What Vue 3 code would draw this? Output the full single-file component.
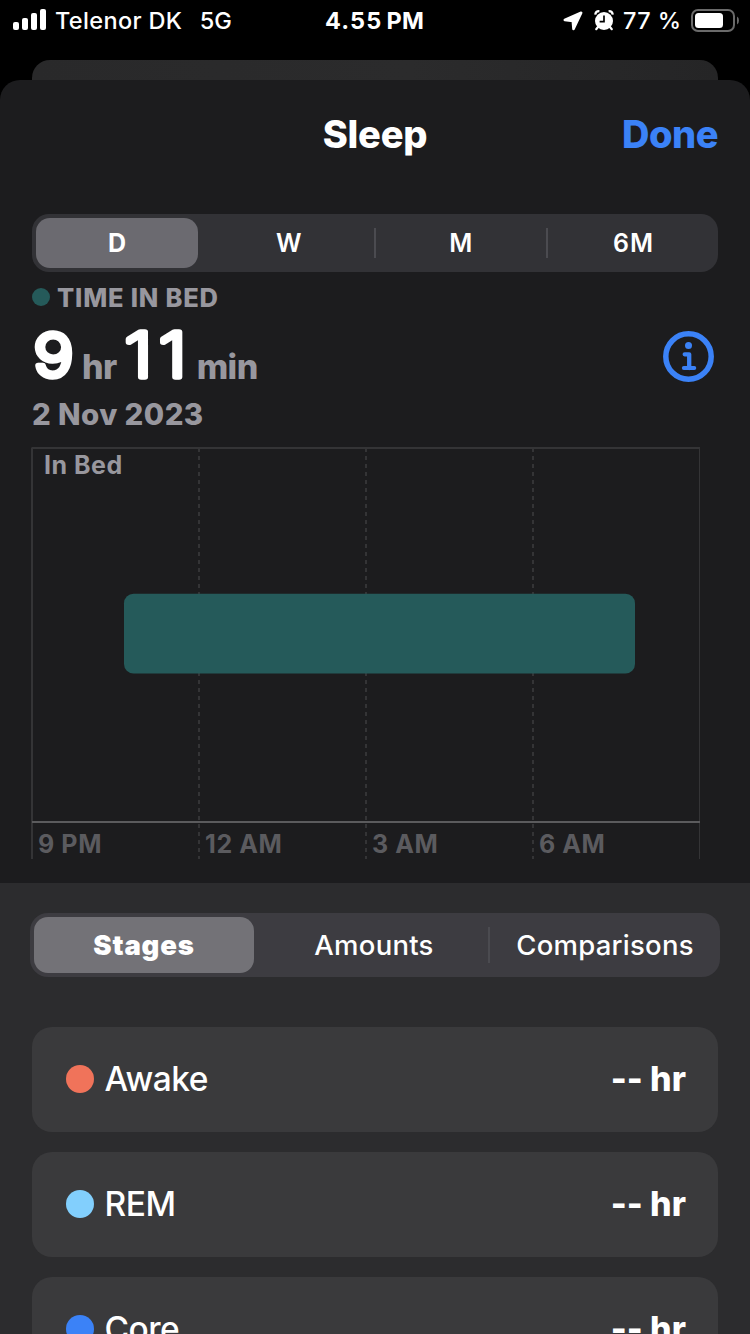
<script setup>
const ranges = ['D', 'W', 'M', '6M']
const tabs = ['Stages', 'Amounts', 'Comparisons']
const ticks = ['9 PM', '12 AM', '3 AM', '6 AM']
const stages = [
  { name: 'Awake', key: 'awake' },
  { name: 'REM', key: 'rem' },
  { name: 'Core', key: 'core' },
]
</script>

<template>
  <div class="phone">
    <div class="status">
      <div class="side left">
        <svg class="signal" width="34" height="22" viewBox="0 0 34 22" fill="#fff">
          <rect x="0" y="13" width="6" height="8" rx="2" />
          <rect x="9" y="9" width="6" height="12" rx="2" />
          <rect x="18" y="4" width="6" height="17" rx="2" />
          <rect x="27" y="0" width="6" height="21" rx="2" />
        </svg>
        <span class="carrier">Telenor DK</span>
        <span class="network">5G</span>
      </div>
      <div class="clock">4.55<span class="pm">PM</span></div>
      <div class="side right">
        <svg class="arrow" width="20" height="20" viewBox="0 0 20 20">
          <path d="M18.200 1.800 L1.800 9 L9.800 10 L10.500 18 Z" fill="#fff" stroke="#fff" stroke-width="2.600" stroke-linejoin="round" />
        </svg>
        <svg class="alarm" width="20" height="21" viewBox="0 0 20 21">
          <path d="M1.200 4.600 A4 4 0 0 1 5.400 1.200 M18.800 4.600 A4 4 0 0 0 14.600 1.200" fill="none" stroke="#fff" stroke-width="2.200" />
          <path d="M4 17 L2.200 19.200 M16 17 L17.800 19.200" stroke="#fff" stroke-width="2.200" stroke-linecap="round" />
          <circle cx="10" cy="11" r="9" fill="#fff" />
          <path d="M10 5.400 V11.600 H5.600" fill="none" stroke="#000" stroke-width="1.700" />
        </svg>
        <span class="percent">77 %</span>
        <svg class="battery" width="48" height="23" viewBox="0 0 48 23">
          <rect x="1" y="1" width="42" height="21" rx="6" fill="none" stroke="#6a6a6a" stroke-width="2" />
          <rect x="4" y="4" width="28" height="15" rx="3.500" fill="#fff" />
          <path d="M46 7.500 Q48 8.500 48 11.500 Q48 14.500 46 15.500 Z" fill="#6a6a6a" />
        </svg>
      </div>
    </div>
    <div class="behind"></div>

    <main class="sheet">
      <header class="header">
        <h1>Sleep</h1>
        <a class="done">Done</a>
      </header>

      <nav class="ranges">
        <div v-for="(r, i) in ranges" :key="r" class="range" :class="{ on: i === 0, rule: i > 1 }">{{ r }}</div>
      </nav>

      <section class="summary">
        <div class="kind"><i class="bullet"></i><span>TIME IN BED</span></div>
        <div class="duration">
          <svg class="num" width="50" height="60"><text x="1.500" y="50" textLength="40" lengthAdjust="spacingAndGlyphs">9</text></svg>
          <span class="unit hr">hr</span>
          <svg class="num" width="72" height="60"><text class="wide" x="-0.500 28.200" y="50" transform="scale(1.2 1)">11</text></svg>
          <span class="unit">min</span>
          <svg class="info" width="51" height="51" viewBox="0.500 0.500 51 51" fill="none" stroke="#3b82f7" stroke-linecap="round" stroke-linejoin="round">
            <circle cx="26" cy="26" r="22.700" stroke-width="5.500" />
            <circle cx="26" cy="15" r="3.500" fill="#3b82f7" stroke="none" />
            <path d="M22.200 23.800 H26.700 V37.500" stroke-width="4.300" />
            <path d="M21.300 37.500 H31.800" stroke-width="3.900" />
          </svg>
        </div>
        <div class="date">2 Nov 2023</div>
      </section>

      <section class="chart">
        <svg class="plot" width="669" height="412" viewBox="0 0 669 412">
          <g stroke="#343436" stroke-width="2">
            <path d="M0.500 1 H669" />
            <path d="M1 1 V412" />
            <path d="M668.500 1 V412" stroke-width="1" />
            <path d="M168 1 V412 M335 1 V412 M502 1 V412" stroke-dasharray="4 4" />
          </g>
          <path d="M1 375 H669" stroke="#5b5b5d" stroke-width="2" />
          <rect x="93" y="146.700" width="511" height="79.800" rx="9.500" fill="#255a5a" />
        </svg>
        <span class="lane">In Bed</span>
        <div class="ticks"><span v-for="t in ticks" :key="t">{{ t }}</span></div>
      </section>

      <section class="details">
        <nav class="tabs">
          <div v-for="(t, i) in tabs" :key="t" class="tab" :class="{ on: i === 0, rule: i === 2 }"><span>{{ t }}</span></div>
        </nav>
        <div class="cards">
          <div v-for="s in stages" :key="s.key" class="card">
            <i class="dot" :class="s.key"></i>
            <span class="name">{{ s.name }}</span>
            <span class="value">-- hr</span>
          </div>
        </div>
      </section>
    </main>
  </div>
</template>

<style>
html, body { background: #000; overflow: hidden; }
</style>

<style scoped>
* { box-sizing: border-box; }
.phone {
  width: 750px; height: 1334px; overflow: hidden; background: #000; color: #fff;
  font-family: Inter, "Liberation Sans", sans-serif; white-space: nowrap;
}
.status {
  height: 60px; padding: 0 11px 19px 13px; display: grid; grid-template-columns: 1fr auto 1fr;
  align-items: center; font-size: 23.5px; line-height: 41px; font-weight: 500;
}
.side { display: flex; align-items: center; }
.right { justify-content: flex-end; }
.signal { margin-right: 8px; margin-top: -1px; }
.carrier { letter-spacing: 0.35px; }
.network { margin-left: 17.5px; }
.clock { font-weight: 700; letter-spacing: 1.2px; margin-left: -3px; }
.pm { margin-left: 4px; letter-spacing: 0.2px; }
.arrow { margin-right: 11px; }
.alarm { margin-right: 9px; }
.percent { margin-right: 9.5px; letter-spacing: 0.4px; }
.behind {
  height: 20px; margin: 0 32px; border-radius: 18px 18px 0 0;
  background: linear-gradient(90deg, #29292a, #2b2b2c 55%, #252526);
}
.sheet { height: 1254px; border-radius: 20px 20px 0 0; background: #1c1c1e; overflow: hidden; }
.header { height: 134px; padding: 0 32px 26px; display: grid; grid-template-columns: 1fr auto 1fr; align-items: center; }
h1 { grid-column: 2; margin: 0; font-size: 38px; line-height: 50px; font-weight: 800; letter-spacing: -0.2px; }
.done { justify-self: end; font-size: 38px; line-height: 50px; font-weight: 800; color: #3b82f7; letter-spacing: -0.5px; }
.ranges { height: 58px; margin: 0 32px; padding: 4px 0; display: grid; grid-template-columns: 170px 172px 172px 172px; border-radius: 17px; background: #323236; }
.range { position: relative; line-height: 50px; text-align: center; font-size: 25px; font-weight: 600; padding-left: 1.5px; }
.range:last-child { letter-spacing: 1px; padding-left: 3px; }
.range.on { margin: 0 4px; border-radius: 14px; background: #6b6a70; font-weight: 700; padding-left: 0; }
.rule::before { content: ""; position: absolute; left: 0; top: 10px; bottom: 10px; width: 2px; background: #4b4b50; }
.summary { height: 175px; padding: 10px 32px 0; }
.kind { display: flex; align-items: center; height: 31px; margin-bottom: 1px; font-size: 25.5px; font-weight: 800; letter-spacing: 0.8px; color: #98979e; }
.bullet { width: 18px; height: 18px; margin: -1px 7px 0 0; border-radius: 50%; background: #255a5a; }
.duration { height: 75px; display: flex; align-items: flex-start; padding-top: 13px; }
.num { overflow: visible; }
.num text { font-size: 61px; font-weight: 300; fill: #fff; stroke: #fff; stroke-width: 5.5px; stroke-linejoin: round; }
.num .wide { font-weight: 200; stroke-width: 5.6px; }
.unit { font-size: 34px; line-height: 50px; margin-top: 15px; font-weight: 800; color: #98979e; letter-spacing: -0.6px; }
.hr { margin-right: 8px; }
.info { margin: 4px 4px 0 auto; }
.date { height: 50px; line-height: 51px; font-size: 29.5px; font-weight: 800; color: #98979e; letter-spacing: 0.4px; }
.chart { position: relative; height: 436px; padding-left: 31px; }
.plot { display: block; }
.lane { position: absolute; left: 44px; top: 2px; line-height: 32px; font-size: 25px; font-weight: 650; letter-spacing: 0.5px; color: #98979e; }
.ticks { position: absolute; left: 38px; top: 381px; display: grid; grid-template-columns: repeat(4, 167px); line-height: 32px; font-size: 25px; font-weight: 650; letter-spacing: 0.6px; color: #5b5b5f; }
.details { background: #2c2c2e; padding-top: 30px; height: 460px; }
.tabs { height: 64px; margin: 0 30px; padding: 4px 0; border-radius: 18px; background: #3d3c41; display: grid; grid-template-columns: 228px 231px 231px; }
.tab { position: relative; line-height: 56px; text-align: center; font-size: 27.5px; font-weight: 550; letter-spacing: 0.25px; padding-left: 1px; }
.tab.on { margin: 0 4px; padding: 0; border-radius: 14px; background: #737277; font-weight: 900; letter-spacing: 0.8px; }
.tab.rule::before { left: -1px; }
.cards { padding: 50px 32px 0; display: flex; flex-direction: column; gap: 20px; }
.card { height: 105px; flex: none; border-radius: 20px; background: #3a3a3c; display: flex; align-items: center; padding: 0 32px 1px 34px; }
.dot { width: 28px; height: 28px; border-radius: 50%; margin-right: 10.5px; }
.awake { background: #f0735a; }
.rem { background: #82cffd; }
.core { background: #3b82f7; }
.name { font-size: 33.5px; font-weight: 550; letter-spacing: -0.5px; }
.value { margin-left: auto; margin-top: -2px; font-size: 34px; font-weight: 800; letter-spacing: 0; }
</style>
